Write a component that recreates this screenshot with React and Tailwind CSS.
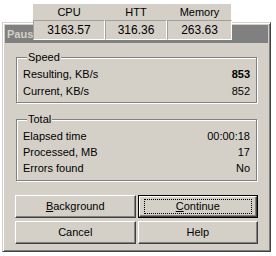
import React from "react";

const face = "bg-[#d4d0c8]";

function Row({ label, value, bold }) {
  return (
    <div className="flex h-[16px] items-center justify-between">
      <span>{label}</span>
      <span className={bold ? "font-bold" : ""}>{value}</span>
    </div>
  );
}

function Group({ title, children, className }) {
  return (
    <fieldset
      className={
        "mx-[11px] border border-[#808080] px-[6px] shadow-[inset_1px_1px_0_#fff,1px_1px_0_#fff] " +
        className
      }
    >
      <legend className={"ml-[4px] px-[1px] leading-[13px] " + face}>{title}</legend>
      {children}
    </fieldset>
  );
}

function Button({ children, isDefault }) {
  const inner = (
    <div className="flex h-full w-full items-center justify-center border border-t-white border-l-white border-b-[#404040] border-r-[#404040] shadow-[inset_-1px_-1px_0_#808080]">
      {isDefault ? (
        <div className="flex h-[15px] w-[calc(100%-8px)] items-center justify-center border border-dotted border-black">
          {children}
        </div>
      ) : (
        children
      )}
    </div>
  );
  return (
    <div className={"h-[23px] " + face + (isDefault ? " border border-black" : "")}>{inner}</div>
  );
}

export default function App() {
  return (
    <div
      className="relative h-[256px] w-[276px] overflow-hidden bg-white pl-[2px] pt-[22px] text-[11px] text-black"
      style={{ fontFamily: '"Liberation Sans", Arial, sans-serif' }}
    >
      <div className={"h-[230px] w-[269px] border border-t-[#d4d0c8] border-l-[#d4d0c8] border-b-[#404040] border-r-[#404040] shadow-[inset_1px_1px_0_#fff,inset_-1px_-1px_0_#808080] p-[2px] " + face}>
        <div className="flex h-[18px] items-center bg-[#808080] pl-[2px] font-bold text-[#d4d0c8]">
          Pause
        </div>

        <Group title="Speed" className="mt-[8px] pb-[3px]">
          <div className="flex flex-col gap-[1px] pt-[2px]">
            <Row label="Resulting, KB/s" value="853" bold />
            <Row label="Current, KB/s" value="852" />
          </div>
        </Group>

        <Group title="Total" className="mt-[10px] pb-[4px]">
          <div className="flex flex-col pt-[2px]">
            <Row label="Elapsed time" value="00:00:18" />
            <Row label="Processed, MB" value="17" />
            <Row label="Errors found" value="No" />
          </div>
        </Group>

        <div className="mx-[10px] mt-[14px] grid grid-cols-2 gap-x-[2px] gap-y-[3px]">
          <Button>
            <span><u>B</u>ackground</span>
          </Button>
          <Button isDefault>
            <span><u>C</u>ontinue</span>
          </Button>
          <Button>Cancel</Button>
          <Button>Help</Button>
        </div>
      </div>

      <div className="absolute left-[33px] top-[4px] w-[199px] border-r border-r-white bg-[#d4d0c8]">
        <div className="grid h-[16px] grid-cols-[72px_62px_65px] items-center text-center text-[11px]">
          <span>CPU</span>
          <span>HTT</span>
          <span>Memory</span>
        </div>
        <div className="grid h-[20px] grid-cols-[72px_62px_65px]">
          {["3163.57", "316.36", "263.63"].map((v) => (
            <div
              key={v}
              className="flex items-center justify-center border border-t-[#a0a0a0] border-l-[#a0a0a0] border-b-white border-r-white text-[12px]"
            >
              {v}
            </div>
          ))}
        </div>
      </div>
    </div>
  );
}
